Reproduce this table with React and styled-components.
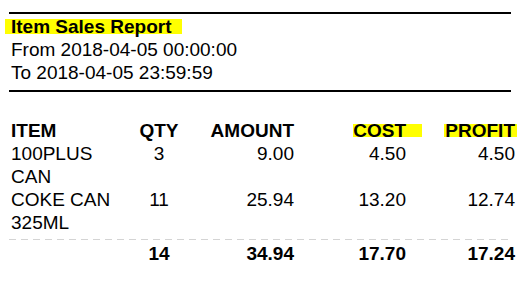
import React from "react";
import styled, { createGlobalStyle } from "styled-components";

const GlobalStyle = createGlobalStyle`
  html, body {
    margin: 0;
    padding: 0;
    background: #fff;
  }
  body {
    font-family: "Liberation Sans", Arial, sans-serif;
    color: #000;
  }
`;

const items = [
  { name: "100PLUS CAN", qty: 3, amount: "9.00", cost: "4.50", profit: "4.50" },
  { name: "COKE CAN 325ML", qty: 11, amount: "25.94", cost: "13.20", profit: "12.74" },
];

const totals = { qty: 14, amount: "34.94", cost: "17.70", profit: "17.24" };

export default function App() {
  return (
    <>
      <GlobalStyle />
      <Page>
        <Heading>
          <Marker $left={6} $right={10}>Item Sales Report</Marker>
          <Line>From 2018-04-05 00:00:00</Line>
          <Line>To 2018-04-05 23:59:59</Line>
        </Heading>

        <Table>
          <Head>ITEM</Head>
          <Head $align="center">QTY</Head>
          <Head $align="right">AMOUNT</Head>
          <Head $align="right">
            <Marker $left={0} $right={16}>COST</Marker>
          </Head>
          <Head $align="right">
            <Marker $left={1} $right={2}>PROFIT</Marker>
          </Head>

          {items.map((it) => (
            <React.Fragment key={it.name}>
              <Cell>{it.name}</Cell>
              <Cell $align="center">{it.qty}</Cell>
              <Cell $align="right">{it.amount}</Cell>
              <Cell $align="right">{it.cost}</Cell>
              <Cell $align="right">{it.profit}</Cell>
            </React.Fragment>
          ))}

          <Dashes />

          <Total />
          <Total $align="center">{totals.qty}</Total>
          <Total $align="right">{totals.amount}</Total>
          <Total $align="right">{totals.cost}</Total>
          <Total $align="right">{totals.profit}</Total>
        </Table>
      </Page>
    </>
  );
}

const Page = styled.div`
  width: 526px;
  padding-top: 12px;
  font-size: 19px;
  line-height: 23px;
`;

const Heading = styled.div`
  display: flex;
  flex-direction: column;
  width: 502px;
  margin-left: 9px;
  padding: 1px 0 6px 2px;
  box-sizing: border-box;
  border-top: 2px solid #000;
  border-bottom: 2px solid #000;
`;

const Line = styled.div``;

const Marker = styled.span`
  position: relative;
  z-index: 0;
  font-weight: bold;
  align-self: flex-start;

  &::before {
    content: "";
    position: absolute;
    z-index: -1;
    left: ${(p) => -p.$left}px;
    right: ${(p) => -p.$right}px;
    top: 4px;
    bottom: 4px;
    background: #ffff00;
  }
`;

const Table = styled.div`
  display: grid;
  grid-template-columns: 113px 70px 100px 112px 109px;
  margin: 27px 0 0 11px;
`;

const Head = styled.div`
  font-weight: bold;
  text-align: ${(p) => p.$align || "left"};
`;

const Cell = styled.div`
  text-align: ${(p) => p.$align || "left"};
`;

const Total = styled(Cell)`
  font-weight: bold;
`;

const Dashes = styled.div`
  grid-column: 1 / -1;
  height: 1px;
  width: 502px;
  margin: 5px 0 2px -2px;
  background: repeating-linear-gradient(
    to right,
    #d4d4d4 0 7px,
    transparent 7px 12px
  );
`;
